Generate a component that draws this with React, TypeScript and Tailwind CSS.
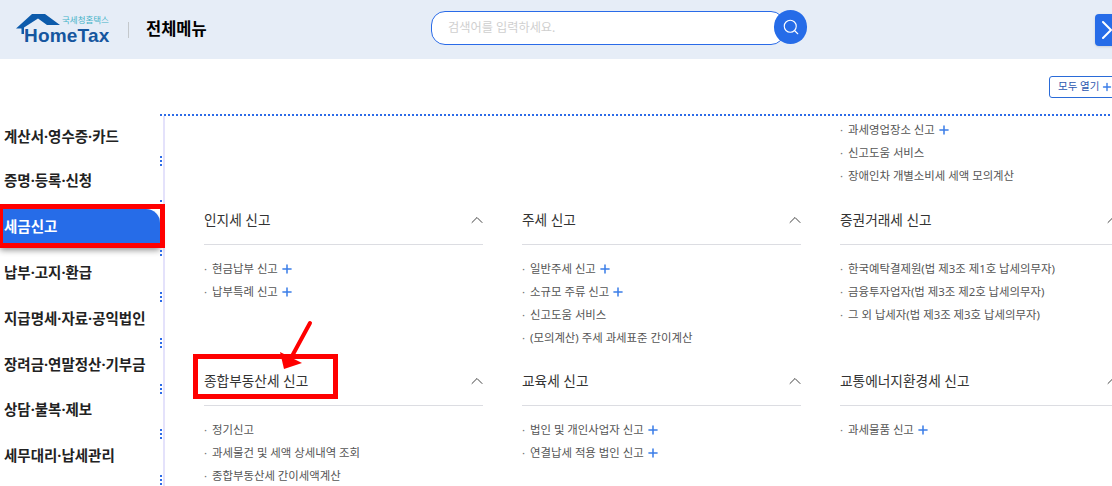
import { ChevronUp, Search, ChevronRight, Plus } from "lucide-react";

const font = { fontFamily: '"Noto Sans", "Noto Sans CJK KR", sans-serif' };

type Item = { t: string; plus?: boolean };
type Sec = { title: string; items: Item[] };

const menu: { t: string; active?: boolean; cls: string }[] = [
  { t: "계산서·영수증·카드", cls: "mt-[3px] mb-[9px]" },
  { t: "증명·등록·신청", cls: "mb-[11px]" },
  { t: "세금신고", active: true, cls: "mb-[11px]" },
  { t: "납부·고지·환급", cls: "mb-[11px]" },
  { t: "지급명세·자료·공익법인", cls: "mb-[11px]" },
  { t: "장려금·연말정산·기부금", cls: "mb-[10px]" },
  { t: "상담·불복·제보", cls: "mb-[11px]" },
  { t: "세무대리·납세관리", cls: "mb-[11px]" },
];

const top: Item[] = [
  { t: "과세영업장소 신고", plus: true },
  { t: "신고도움 서비스" },
  { t: "장애인차 개별소비세 세액 모의계산" },
];

const row1: Sec[] = [
  { title: "인지세 신고", items: [{ t: "현금납부 신고", plus: true }, { t: "납부특례 신고", plus: true }] },
  {
    title: "주세 신고",
    items: [
      { t: "일반주세 신고", plus: true },
      { t: "소규모 주류 신고", plus: true },
      { t: "신고도움 서비스" },
      { t: "(모의계산) 주세 과세표준 간이계산" },
    ],
  },
  {
    title: "증권거래세 신고",
    items: [
      { t: "한국예탁결제원(법 제3조 제1호 납세의무자)" },
      { t: "금융투자업자(법 제3조 제2호 납세의무자)" },
      { t: "그 외 납세자(법 제3조 제3호 납세의무자)" },
    ],
  },
];

const row2: Sec[] = [
  {
    title: "종합부동산세 신고",
    items: [{ t: "정기신고" }, { t: "과세물건 및 세액 상세내역 조회" }, { t: "종합부동산세 간이세액계산" }],
  },
  { title: "교육세 신고", items: [{ t: "법인 및 개인사업자 신고", plus: true }, { t: "연결납세 적용 법인 신고", plus: true }] },
  { title: "교통에너지환경세 신고", items: [{ t: "과세물품 신고", plus: true }] },
];

function Links({ items, className = "" }: { items: Item[]; className?: string }) {
  return (
    <ul className={className}>
      {items.map((i) => (
        <li key={i.t} className="flex h-[23px] items-center text-[11.4px] text-[#555] whitespace-nowrap">
          <span className="w-2 text-[#777] leading-none">·</span>
          <span>{i.t}</span>
          {i.plus && <Plus size={14} strokeWidth={2.6} className="ml-[2px] text-[#3b7de8]" />}
        </li>
      ))}
    </ul>
  );
}

function Section({ s, h }: { s: Sec; h: string }) {
  return (
    <div className={h}>
      <div className="flex h-[36px] items-start justify-between border-b border-[#dcdde2]">
        <span className="text-[13.7px] leading-[22px] text-[#333] whitespace-nowrap">{s.title}</span>
        <ChevronUp size={20} strokeWidth={1.2} className="-mr-[4px] mt-[1px] text-[#444]" />
      </div>
      <Links items={s.items} className="mt-[12px]" />
    </div>
  );
}

export default function App() {
  return (
    <div className="relative h-[486px] w-[1112px] overflow-hidden bg-white" style={font}>
      <header className="relative flex h-[59px] items-center bg-[#e6edf7]">
        <div className="ml-4 flex w-[96px] items-center">
          <div className="relative h-[32px] w-[95px]">
            <svg viewBox="16 13 60 20" className="absolute left-0 top-0 h-[20px] w-[60px]">
              <path d="M16 27.5 L32 13 H45 L60 24 H47 L38 17.5 L24 26.5 V33 H21.5 V27.5 Z" fill="#0d5bab" />
            </svg>
            <span className="absolute left-[46px] top-[1px] text-[8.5px] leading-[10px] text-[#45b3c8] whitespace-nowrap">
              국세청홈택스
            </span>
            <span
              className="absolute left-[8px] top-[12px] text-[19px] leading-[20px] font-bold tracking-[0.2px] text-[#15569f] whitespace-nowrap"
              style={{ fontFamily: '"Liberation Sans", sans-serif' }}
            >
              HomeTax
            </span>
          </div>
        </div>
        <span className="ml-[16px] h-4 w-px bg-[#c4c8cc]" />
        <span className="ml-[17px] w-[61px] text-[16.5px] font-bold text-black whitespace-nowrap">전체메뉴</span>
        <div className="relative ml-[224px] -mt-[3px] flex h-[34px] w-[354px] items-center rounded-[14px] border border-[#2a6be8] bg-white pl-4">
          <span className="text-[12.2px] text-[#cfcfcf]">검색어를 입력하세요.</span>
          <span className="absolute -right-[23px] -top-[2px] flex h-[34px] w-[33px] items-center justify-center rounded-full bg-[#266ce8]">
            <Search size={18} strokeWidth={1.5} className="text-white" />
          </span>
        </div>
        <span className="absolute -right-[10px] top-[14px] flex h-[32px] w-[27px] items-center justify-start rounded-[4px] bg-[#266ce8] shadow-sm">
          <ChevronRight size={32} strokeWidth={1.5} className="-ml-[4px] shrink-0 text-white" />
        </span>
      </header>

      <div className="flex h-[55px] items-start justify-end pt-[17px]">
        <span className="-mr-[9px] flex h-[22px] w-[72px] items-center rounded-[3px] border border-[#2a6bd8] pl-[8px] text-[10.5px] text-[#2c58b0] whitespace-nowrap">
          모두 열기 <Plus size={12} strokeWidth={2.8} className="ml-[2px] text-[#3b7de8]" />
        </span>
      </div>

      <div className="ml-[160px] h-[2px] bg-[repeating-linear-gradient(90deg,#2d6be8_0_2px,transparent_2px_4px)]" />

      <div className="flex">
        <nav className="w-[160px] shrink-0">
          {menu.map((m) => (
            <div
              key={m.t}
              className={`relative flex h-[35px] items-center pl-[4px] text-[14.5px] font-bold whitespace-nowrap ${m.cls} ${
                m.active
                  ? "rounded-tr-[14px] bg-[#266ce8] text-white shadow-[0_6px_6px_rgba(0,0,0,0.45)]"
                  : "text-[#222]"
              }`}
            >
              {m.t}
              <span className="absolute left-[160px] -bottom-[12px] h-[10px] w-[2px] bg-[repeating-linear-gradient(180deg,#2d6be8_0_2px,transparent_2px_4px)]" />
            </div>
          ))}
        </nav>
        <div className="ml-[3px] h-[370px] w-[2px] shrink-0 bg-[#e4e2fb]" />
        <main className="min-w-0 flex-1 pl-[39px]">
          <div className="grid grid-cols-[279px_279px_279px] gap-x-[39px]">
            <div className="h-[93px]" />
            <div />
            <Links items={top} className="pt-[2px]" />
            {row1.map((s) => (
              <Section key={s.title} s={s} h="h-[161px]" />
            ))}
            {row2.map((s) => (
              <Section key={s.title} s={s} h="h-[130px]" />
            ))}
          </div>
        </main>
      </div>

      {/* red annotations */}
      <div className="absolute -left-[2px] top-[204px] h-[44px] w-[167px] border-[5px] border-[#ff0000]" />
      <div className="absolute left-[193px] top-[354px] h-[45px] w-[145px] border-[5px] border-[#ff0000]" />
      <svg className="absolute left-[275px] top-[318px]" width="45" height="55" viewBox="0 0 45 55">
        <path d="M35 5 L16 40" stroke="#ff0000" strokeWidth="4" strokeLinecap="round" />
        <path d="M5 34 L27 45 L9 51 Z" fill="#ff0000" />
      </svg>
    </div>
  );
}
